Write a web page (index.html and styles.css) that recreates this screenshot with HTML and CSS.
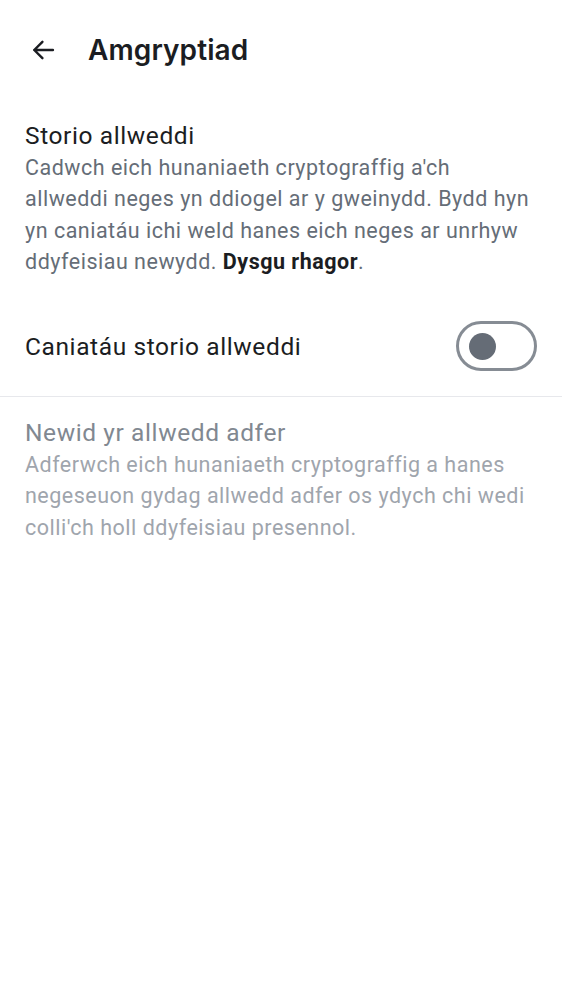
FILE: index.html
```html
<!DOCTYPE html>
<html lang="cy">
<head>
<meta charset="utf-8">
<link rel="stylesheet" href="styles.css">
</head>
<body>
<header class="topbar">
  <button class="back" aria-label="Yn ôl">
    <svg width="28" height="28" viewBox="0 0 24 24" fill="none" stroke="#1b1d22" stroke-width="2.1" stroke-linecap="round" stroke-linejoin="round"><path d="M20.5 12H4.5M11.5 5l-7 7 7 7"/></svg>
  </button>
  <h1 class="title">Amgryptiad</h1>
</header>
<main>
  <section class="block">
    <h2 class="heading">Storio allweddi</h2>
    <p class="desc">Cadwch eich hunaniaeth cryptograffig a'ch allweddi neges yn ddiogel ar y gweinydd. Bydd hyn yn caniatáu ichi weld hanes eich neges ar unrhyw ddyfeisiau newydd. <b class="link">Dysgu rhagor</b>.</p>
  </section>
  <div class="row">
    <span class="row-label">Caniatáu storio allweddi</span>
    <span class="switch"><span class="thumb"></span></span>
  </div>
  <div class="divider"></div>
  <section class="block disabled">
    <h2 class="heading">Newid yr allwedd adfer</h2>
    <p class="desc">Adferwch eich hunaniaeth cryptograffig a hanes negeseuon gydag allwedd adfer os ydych chi wedi colli'ch holl ddyfeisiau presennol.</p>
  </section>
</main>
</body>
</html>
```
FILE: styles.css
```css
* { box-sizing: border-box; }
body {
  margin: 0;
  background: #fff;
  font-family: Roboto, "Noto Sans", sans-serif;
  color: #1b1d22;
}
.topbar {
  display: flex;
  align-items: center;
  height: 100px;
  padding-left: 28px;
}
.back {
  border: 0;
  background: none;
  padding: 0;
  width: 30px;
  height: 30px;
  display: flex;
  align-items: center;
  justify-content: center;
  margin-right: 30px;
}
.title {
  margin: 0;
  font-family: Inter, "Noto Sans", sans-serif;
  font-weight: 600;
  font-size: 28px;
  letter-spacing: 0.1px;
  color: #1b1d22;
}
.block {
  padding: 20px 25px 0 25px;
}
.heading {
  margin: 0;
  font-weight: 400;
  font-size: 24.5px;
  line-height: 32px;
  letter-spacing: 0.6px;
  color: #1b1d22;
}
.desc {
  margin: 0;
  font-size: 21.5px;
  line-height: 31.3px;
  letter-spacing: 0.5px;
  color: #656d77;
}
.link { font-weight: 700; color: #1b1d22; }
.row {
  display: flex;
  align-items: center;
  justify-content: space-between;
  margin-top: 44px;
  padding: 0 25px;
  height: 50px;
}
.row-label {
  font-size: 24.5px;
  letter-spacing: 0.6px;
  color: #1b1d22;
}
.switch {
  width: 81px;
  height: 50px;
  border: 3px solid #868c94;
  border-radius: 25px;
  display: flex;
  align-items: center;
  padding-left: 10px;
}
.thumb {
  width: 27px;
  height: 27px;
  border-radius: 50%;
  background: #656c76;
}
.divider {
  height: 1px;
  background: #e7e8ec;
  margin-top: 25px;
}
.disabled .heading { color: #818891; }
.disabled .desc { color: #9fa5ad; }
```
